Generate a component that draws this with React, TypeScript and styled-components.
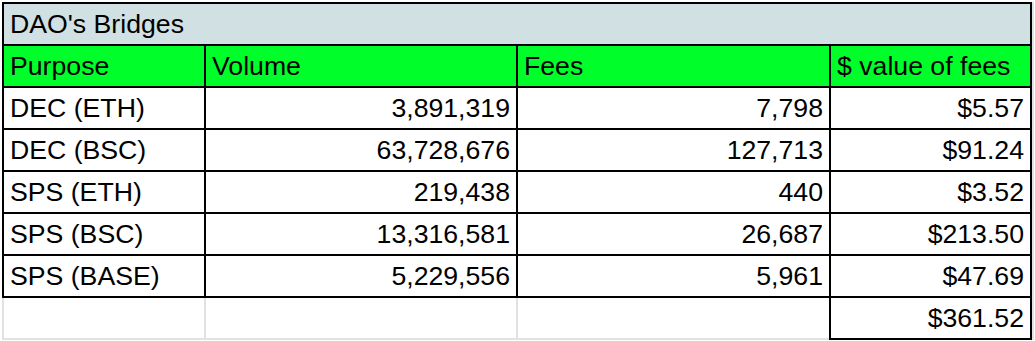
import React from "react"
import styled, { createGlobalStyle } from "styled-components"

const rows = [
    ["DEC (ETH)", "3,891,319", "7,798", "$5.57"],
    ["DEC (BSC)", "63,728,676", "127,713", "$91.24"],
    ["SPS (ETH)", "219,438", "440", "$3.52"],
    ["SPS (BSC)", "13,316,581", "26,687", "$213.50"],
    ["SPS (BASE)", "5,229,556", "5,961", "$47.69"],
]

const headers = ["Purpose", "Volume", "Fees", "$ value of fees"]

export default function App() {
    return (
        <>
            <GlobalStyle />
            <SSheet>
                <STable>
                    <STitle>DAO's Bridges</STitle>
                    {headers.map((h) => (
                        <SHeadCell key={h}>{h}</SHeadCell>
                    ))}
                    {rows.map((r) =>
                        r.map((v, i) => (
                            <SCell key={r[0] + i} $right={i > 0}>
                                {v}
                            </SCell>
                        ))
                    )}
                </STable>
                <STotalRow>
                    <SBlank $w={200} $first />
                    <SBlank $w={310} />
                    <SBlank $w={311} $last />
                    <STotal>$361.52</STotal>
                </STotalRow>
            </SSheet>
        </>
    )
}

const GlobalStyle = createGlobalStyle`
    html, body {
        margin: 0;
        padding: 0;
        background: #fff;
    }
    body {
        font-family: "Liberation Sans", Arial, sans-serif;
        font-size: 26.67px;
        color: #000;
    }
`

const SSheet = styled.div`
    padding: 2px 0 0 2px;
    width: 1035px;
    height: 341px;
    box-sizing: border-box;
    overflow: hidden;
`

const STable = styled.div`
    display: grid;
    grid-template-columns: 200px 310px 311px 199px;
    grid-auto-rows: 40px;
    gap: 2px;
    padding: 2px;
    width: 1030px;
    box-sizing: border-box;
    background: #000;
    box-shadow: 2px 0 0 #e2e2e2;
`

const SCellBase = styled.div`
    display: flex;
    align-items: center;
    padding: 0 6px;
    white-space: nowrap;
    overflow: hidden;
    line-height: 1.15;
`

const STitle = styled(SCellBase)`
    grid-column: 1 / -1;
    background: #d0e0e3;
`

const SHeadCell = styled(SCellBase)`
    background: #00ff2a;
`

const SCell = styled(SCellBase)<{ $right?: boolean }>`
    background: #fff;
    justify-content: ${(p) => (p.$right ? "flex-end" : "flex-start")};
`

const STotalRow = styled.div`
    display: flex;
    height: 42px;
`

const SBlank = styled.div<{ $w: number; $first?: boolean; $last?: boolean }>`
    flex: none;
    width: ${(p) => p.$w}px;
    height: 40px;
    border-left: ${(p) => (p.$first ? "2px solid #e2e2e2" : "none")};
    border-right: ${(p) => (p.$last ? "none" : "2px solid #e2e2e2")};
    border-bottom: 2px solid #e2e2e2;
`

const STotal = styled(SCellBase)`
    flex: none;
    width: 187px;
    height: 40px;
    border: 2px solid #000;
    border-top: none;
    justify-content: flex-end;
    box-shadow: 2px 0 0 #e2e2e2;
`
